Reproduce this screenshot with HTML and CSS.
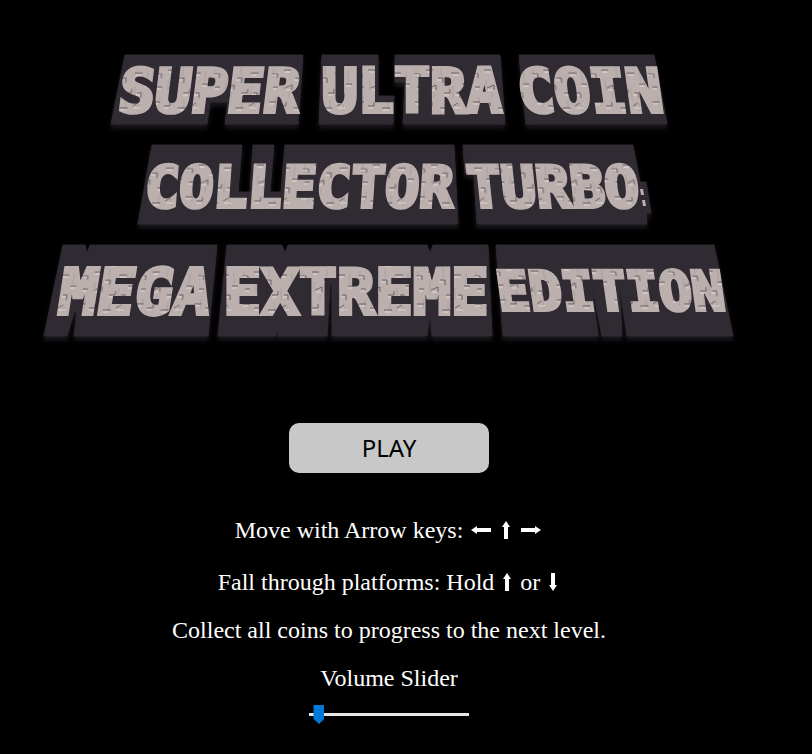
FILE: index.html
```html
<!DOCTYPE html>
<html lang="en">
<head>
<meta charset="utf-8">
<meta name="viewport" content="width=device-width, initial-scale=1">
<title>Super Ultra Coin Collector Turbo</title>
<link rel="stylesheet" href="styles.css">
</head>
<body>
<main class="menu">
  <h1 class="title">
    <svg class="logo" viewBox="40 45 700 300" xmlns="http://www.w3.org/2000/svg">
      <defs>
        <pattern id="stone" width="58" height="46" patternUnits="userSpaceOnUse">
          <rect width="58" height="46" fill="#bbb0ae"/>
          <path d="M4 3v9M16 14v10M29 1v8M41 20v12M52 5v11M9 31v10M34 34v9M22 26v6M47 38v7" stroke="#a89e9c" fill="none"/>
          <path d="M2 8h6v4M14 4h7M26 12h5v5M39 7h8M50 18h6M5 21h5M17 22l7-3v5M32 27h6v-4M44 27h4v5M3 36h7M14 40h6v-4M28 42h8M41 40l5-3" stroke="#574b51" stroke-width=".8" fill="none"/>
          <path d="M2 9h5M15 6h5M25 14h4M40 9h6M50 20h5M5 23h4M18 24h5M32 29h5M43 29h4M3 38h6M14 42h5M29 44h6M42 42h7" stroke="#e0d9d6" fill="none"/>
        </pattern>
      </defs>
      <g class="plates">
        <path d="M126 55H304L299 124H226L229 102H211L208 124H112Z"/>
        <path d="M323 55H379V96H395L394 124H320Z"/>
        <path d="M396 55H501L506 124H404L406 82H396Z"/>
        <path d="M520 55H655L668 124H527Z"/>
        <path d="M153 145H243L239 192H251L254 145H275L271 192H282L286 145H455L459 224H139Z"/>
        <path d="M464 145H634L641 182H647L652 213H647L648 224H478L475 174H466Z"/>
        <path d="M64 245H86L88 253L91 245H218L209 336H75L78 312H75L68 336H45Z"/>
        <path d="M228 245H283L286 253L289 245H428L431 253L434 245H489L493 336H433L431 312L428 336H333V285H331L328 336H279V330L276 336H219Z"/>
        <path d="M497 245H715L734 336H628L620 280L623 336H603L592 280L599 336H504Z"/>
      </g>
      <g class="colon"><path d="M641 189h3l1 6h-3zM643 200h3l1 6h-3z"/></g>
      <g class="letters row-one">
        <text transform="translate(208 112) skewX(-7)">SUPER</text>
        <text transform="translate(413 112)">ULTRA</text>
        <text transform="translate(594 112) skewX(8)">COIN</text>
      </g>
      <g class="letters row-two">
        <text transform="translate(299 207) skewX(-4)">COLLECTOR</text>
        <text transform="translate(556 207) skewX(6)">TURBO</text>
      </g>
      <g class="letters row-three">
        <text transform="translate(133 314) skewX(-9)">MEGA</text>
        <text transform="translate(357 314)">EXTREME</text>
      </g>
      <g class="letters row-three-end">
        <text transform="translate(614 310) skewX(8)">EDITION</text>
      </g>
    </svg>
  </h1>

  <button class="play" type="button">PLAY</button>

  <section class="help">
    <p class="keys">Move with Arrow keys:
      <svg class="wide" viewBox="0 0 20 18" role="img" aria-label="left"><path d="M0 9L6 5V7H20V11H6V13Z"/></svg>
      <svg class="tall" viewBox="0 0 8 18" role="img" aria-label="up"><path d="M4 0L8 6H6V18H2V6H0Z"/></svg>
      <svg class="wide" viewBox="0 0 20 18" role="img" aria-label="right"><path d="M20 9L14 5V7H0V11H14V13Z"/></svg>
    </p>
    <p>Fall through platforms: Hold
      <svg class="tall" viewBox="0 0 8 18" role="img" aria-label="up"><path d="M4 0L8 6H6V18H2V6H0Z"/></svg>
      or
      <svg class="tall" viewBox="0 0 8 18" role="img" aria-label="down"><path d="M4 18L8 12H6V0H2V12H0Z"/></svg>
    </p>
    <p>Collect all coins to progress to the next level.</p>
    <label for="volume">Volume Slider</label>
  </section>
  <input class="volume" id="volume" type="range" min="0" max="100" value="3">
</main>
</body>
</html>
```

FILE: styles.css
```css
* { box-sizing: border-box; }

body {
  margin: 0;
  background: #000;
  color: #fff;
  font: 24px/28px "Liberation Serif", "Times New Roman", serif;
}

.menu {
  display: flex;
  flex-direction: column;
  align-items: center;
  padding: 45px 34px 30px 0;
  text-align: center;
}

.title {
  width: 100%;
  max-width: 700px;
  margin: 0 0 78px;
  font-size: 24px;
}

.logo {
  display: block;
  width: 100%;
}

.plates {
  fill: #302a33;
  stroke: #302a33;
  filter: drop-shadow(0 4px 2px #1b171d);
}

.colon { fill: #bbb0ae; }

.letters {
  fill: url(#stone);
  stroke: url(#stone);
  stroke-width: 4px;
  stroke-linejoin: miter;
  text-anchor: middle;
  font-family: "DejaVu Sans Mono", monospace;
  font-weight: 700;
}

.row-one { font-size: 60px; }
.row-two { font-size: 57px; }
.row-three { font-size: 63px; }
.row-three-end { font-size: 54px; }

.play {
  width: 200px;
  height: 50px;
  padding: 0;
  border: 0;
  border-radius: 10px;
  background: #c8c8c8;
  color: #000;
  font: 24px/32px "Noto Sans", sans-serif;
  cursor: pointer;
}

.help {
  display: flex;
  flex-direction: column;
  gap: 20px;
  margin-top: 39px;
}

.help p { margin: 0; }
.help .keys { line-height: 36px; }

.help svg {
  height: 18px;
  fill: #fff;
  vertical-align: -1px;
}

.wide {
  width: 20px;
  margin: 0 2px;
}

.tall {
  width: 8px;
  margin: 0 3px;
}

.volume {
  width: 160px;
  height: 19px;
  margin: 13px 0 0;
  appearance: none;
  background: transparent;
}

.volume::-webkit-slider-runnable-track {
  height: 3px;
  background: #e7e7e7;
}

.volume::-webkit-slider-thumb {
  width: 11px;
  height: 19px;
  margin-top: -8px;
  appearance: none;
  background: #0078d7;
  clip-path: polygon(0 0, 100% 0, 100% 72%, 50% 100%, 0 72%);
}
```
